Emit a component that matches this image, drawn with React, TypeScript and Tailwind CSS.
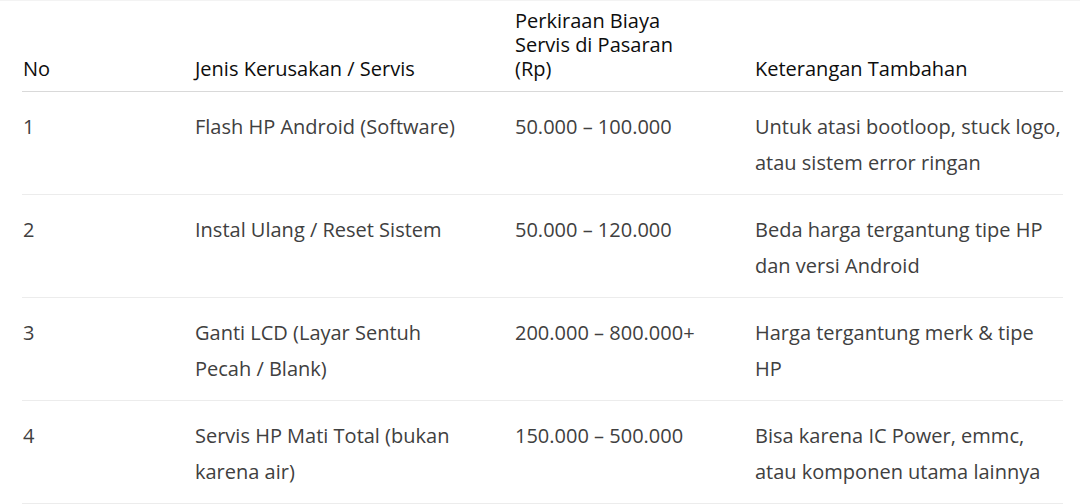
import React from 'react';

const rows = [
  {
    no: '1',
    jenis: ['Flash HP Android (Software)'],
    biaya: '50.000 – 100.000',
    ket: ['Untuk atasi bootloop, stuck logo,', 'atau sistem error ringan'],
  },
  {
    no: '2',
    jenis: ['Instal Ulang / Reset Sistem'],
    biaya: '50.000 – 120.000',
    ket: ['Beda harga tergantung tipe HP', 'dan versi Android'],
  },
  {
    no: '3',
    jenis: ['Ganti LCD (Layar Sentuh', 'Pecah / Blank)'],
    biaya: '200.000 – 800.000+',
    ket: ['Harga tergantung merk & tipe', 'HP'],
  },
  {
    no: '4',
    jenis: ['Servis HP Mati Total (bukan', 'karena air)'],
    biaya: '150.000 – 500.000',
    ket: ['Bisa karena IC Power, emmc,', 'atau komponen utama lainnya'],
  },
];

const th = 'align-bottom font-normal text-[20px] leading-[24px] text-[#0d0d0d] pt-[8px] pb-[10px] pl-px whitespace-nowrap';
const td = 'align-top text-[20px] leading-[36px] text-[#404040] pt-[17px] pb-[13px] pl-px whitespace-nowrap';

export default function App() {
  return (
    <div className="w-[1080px] h-[504px] overflow-hidden bg-white border-t border-[#f3f3f3] font-['Open_Sans',sans-serif]">
      <table className="ml-[22px] w-[1041px] table-fixed border-collapse text-left">
        <colgroup>
          <col className="w-[172px]" />
          <col className="w-[320px]" />
          <col className="w-[240px]" />
          <col className="w-[309px]" />
        </colgroup>
        <thead>
          <tr className="border-b border-[#d9d9d9]">
            <th className={th}>No</th>
            <th className={th}>Jenis Kerusakan / Servis</th>
            <th className={th}>
              Perkiraan Biaya
              <br />
              Servis di Pasaran
              <br />
              (Rp)
            </th>
            <th className={th}>Keterangan Tambahan</th>
          </tr>
        </thead>
        <tbody>
          {rows.map((r) => (
            <tr key={r.no} className="border-b border-[#ececec]">
              <td className={td}>{r.no}</td>
              <td className={td}>
                {r.jenis.map((l) => (
                  <div key={l}>{l}</div>
                ))}
              </td>
              <td className={td}>{r.biaya}</td>
              <td className={td}>
                {r.ket.map((l) => (
                  <div key={l}>{l}</div>
                ))}
              </td>
            </tr>
          ))}
        </tbody>
      </table>
    </div>
  );
}
